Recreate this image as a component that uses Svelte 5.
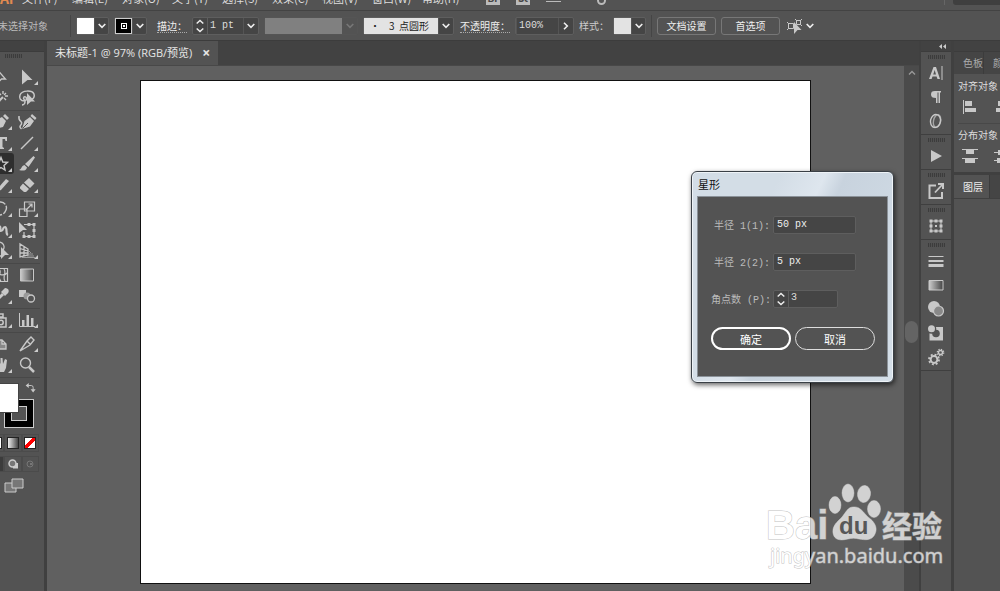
<script>
  const menus = ['文件(F)', '编辑(E)', '对象(O)', '文字(T)', '选择(S)', '效果(C)', '视图(V)', '窗口(W)', '帮助(H)']

  let strokeWidth = $state('1 pt')
  let opacity = $state('100%')
  let radius1 = $state('50 px')
  let radius2 = $state('5 px')
  let points = $state('3')
  let tool = $state('star')

  // every icon sits in a 16x16 box, currentColor for fill and stroke
  const line = 'fill="none" stroke="currentColor"'
  const icons = {
    direct: `<path d="M5 1.5 L12.5 10 L8.5 10 L5 13.5 Z" ${line} stroke-width="1.3"/>`,
    select: `<path d="M3 .5 L13.5 11 L8.5 11 L3 15.5 Z" fill="currentColor"/>`,
    wand: `<path d="M2 15 L10 7" ${line} stroke-width="2"/><path d="M10 1 v3 M13 3 l-2 2 M15 6 h-3 M6 3 l2 2 M13 10 l-2 -2" ${line} stroke-width="1.4"/>`,
    lasso: `<path d="M6 11 C1 11 0 8 1 5 C3 0 13 0 15 4 C16 7 14 9 13 9 M6 11 C9 9 7 6 5 7 C3 9 7 10 6 12 C6 14 4 15 3 15" ${line} stroke-width="1.5"/><path d="M8 3 L16 11.5 L12 11.5 L8 15 Z" fill="currentColor"/>`,
    pen: `<path d="M1 15 L3 6 L9 3 L13 7 L10 13 Z M10 2 L12 0 L16 4 L14 6 Z" fill="currentColor"/><path d="M1 15 L7 9" stroke="#535353"/>`,
    curve: `<path d="M3 15 L5.500 7 L11 3 L15 7 L11 12.500 Z M11.500 2 L13 0 L17.500 4 L16 6 Z" fill="currentColor"/><path d="M3.500 14.500 L9 9" stroke="#535353"/><path d="M0 2 C-1 8 4 7 2.500 10 C1 12 0 13 2.500 15" ${line} stroke-width="1.5"/>`,
    type: `<path d="M2 2 H14 V6 H12.500 L12 4 H9.500 V12 L11 13 V14 H5 V13 L6.500 12 V4 H4 L3.500 6 H2 Z" fill="currentColor"/>`,
    line: `<path d="M2 14 L14 2" ${line} stroke-width="1.5"/>`,
    star: `<path d="M8 1.500 L9.800 6 L14.500 6.300 L11 9.500 L12 14 L8 11.500 L4 14 L5 9.500 L1.500 6.300 L6.200 6 Z" ${line} stroke-width="1.4"/>`,
    brush: `<path d="M14.500 0 L16 1.500 L9.500 11 L6 8 Z M5.500 9 L8 11.500 C7 15 4 15 0 14 C3 13 2 10 5.500 9 Z" fill="currentColor"/>`,
    pencil: `<path d="M1 6 C5 3 7 6 4 9 C1 12 3 14 7 13" ${line} stroke-width="1.5"/><path d="M13 2 L16 4 L8 13 L5 14 L6 10 Z" fill="currentColor"/>`,
    eraser: `<path d="M1 10 L4 6.500 L10 12 L7 15 L5 15 L1 11.500 Z M5 5.500 L10 1 L15.500 6.500 L11 11 Z" fill="currentColor"/>`,
    rotate: `<path d="M4 2 C10 -1 15 4 13 9 C11 14 7 15 3 13" ${line} stroke-width="1.4" stroke-dasharray="9 1.500"/>`,
    scale: `<path d="M5.500 1 H15.500 V10 H5.500 Z M.5 8 H8 V15.500 H.5 Z M7 9 L13 3 M9.500 3 H13 V6.500" ${line} stroke-width="1.2"/>`,
    warp: `<path d="M1 14 C4 10 3 5 6 4 C9 5 6 8 8 9 C11 9 9 5 12 5 C15 6 12 12 15 13" ${line} stroke-width="2.200"/>`,
    free: `<path d="M0 0 L8 8 L4 8 L0 11 Z" fill="currentColor"/><path d="M5 2.500 H15 V14.500 H5 V10" ${line} stroke-width="1.2"/><path d="M13.500 1 h3 v3 h-3 Z M8.500 1 h3 v3 h-3 Z M13.500 7 h3 v3 h-3 Z M13.500 13 h3 v3 h-3 Z M8.500 13 h3 v3 h-3 Z M3.500 13 h3 v3 h-3 Z" fill="currentColor"/>`,
    shape: `<path d="M2 7 A5 5 0 1 1 10 7 M2 7 V13 H9" ${line} stroke-width="1.4"/><path d="M8 4 L16 12 L12 12 L8 16 Z" fill="currentColor"/>`,
    perspective: `<path d="M1 1 V14 L9 12 V6 Z M5 3.500 V13 M1 5.500 L9 8 M1 10 L9 10" ${line} stroke-width="1.3"/><path d="M10 8 L12 10 M10 11 H14 M3 14.500 H16 M8 13 H15" ${line} stroke-width="1" opacity=".6"/>`,
    mesh: `<path d="M1.500 1.500 H14.500 V14.500 H1.500 Z M1 8 C5 3 9 12 14 6 M6 2 C10 5 3 10 8 14 M11 2 C14 6 9 10 12 14" ${line} stroke-width="1.2"/>`,
    gradient: `<path d="M1.500 2 H14.500 V14 H1.500 Z" fill="url(#ramp)" stroke="currentColor"/>`,
    dropper: `<path d="M12 0 C16 0 17 4 14 6 L12 8 L8 4 Z" fill="currentColor"/><path d="M10 6 L3 13 L1 15" ${line} stroke-width="3"/>`,
    blend: `<path d="M0 2 H7 V9 H0 Z" fill="currentColor"/><circle cx="8" cy="8" r="3.500" fill="#999"/><circle cx="12" cy="10.500" r="3.500" fill="#535353" stroke="currentColor" stroke-width="1.3"/>`,
    spray: `<path d="M3 6 H13 V15 H3 Z M6 2 H10 V5 H6 Z" ${line} stroke-width="1.500"/><circle cx="8" cy="10.500" r="2.200" ${line} stroke-width="1.500"/><path d="M1 1 h2 v2 h-2 Z" fill="currentColor"/>`,
    chart: `<path d="M.5 1 V14.500 H16" ${line}/><path d="M3 8 h2.500 v6 h-2.500 Z M7.500 3 h2.500 v11 h-2.500 Z M12 6 h2.500 v8 h-2.500 Z" fill="currentColor"/>`,
    artboard: `<path d="M2 4 H9 L13 8 V13 H2 Z M9 4 V8 H13" fill="#888" stroke="currentColor" stroke-width="1.300"/>`,
    slice: `<path d="M1 15 L8 5 L12 1 L15 4 L11 9 Z M8 5 L11 8" ${line} stroke-width="1.400"/>`,
    hand: `<path d="M3 8 L5 9 L4 3 L6 3 L7.500 7 V1 H9.500 L10 7 L12 2 L14 3 L13 11 L11 15 H6 Z" fill="currentColor"/>`,
    zoom: `<circle cx="6.500" cy="6" r="5" ${line} stroke-width="1.400"/><path d="M10 10 L15 15" ${line} stroke-width="2.500"/>`,
    character: `<path d="M1 14 L5.500 2 H8 L12 14 H9.500 L8.600 11.500 H4.500 L3.600 14 Z M5.200 9.500 H8 L6.700 5 Z" fill="currentColor" fill-rule="evenodd"/><path d="M14 1 V15" ${line}/>`,
    paragraph: `<path d="M3 5.500 C3 3 4 2 7 2 H13 V3.500 H12 V14 H10.500 V3.500 H9.500 V14 H8 V9 C4.500 9 3 8 3 5.500 Z" fill="currentColor"/>`,
    opentype: `<ellipse cx="7.500" cy="8" rx="5" ry="6.500" transform="rotate(12 7.500 8)" ${line} stroke-width="1.400"/><ellipse cx="9" cy="8" rx="3.500" ry="6.500" transform="rotate(12 9 8)" ${line} stroke-width="1.400" opacity=".7"/>`,
    play: `<path d="M3 2 L14 8 L3 14 Z" fill="currentColor"/>`,
    exportAsset: `<path d="M8 2.500 H1.500 V15 H14 V9" ${line} stroke-width="2"/><path d="M7 9.500 L14 2" ${line} stroke-width="1.800"/><path d="M10 0 H16 V6 H14 V2 H10 Z" fill="currentColor"/>`,
    transform: `<path d="M3 3 H13 V13 H3 Z" ${line}/><path d="M1.500 1.500 h3 v3 h-3 Z M6.500 1.500 h3 v3 h-3 Z M11.500 1.500 h3 v3 h-3 Z M1.500 6.500 h3 v3 h-3 Z M11.500 6.500 h3 v3 h-3 Z M1.500 11.500 h3 v3 h-3 Z M6.500 11.500 h3 v3 h-3 Z M11.500 11.500 h3 v3 h-3 Z M7 7 h2 v2 h-2 Z" fill="currentColor"/>`,
    stroke: `<path d="M.5 3 H15.500 v1 H.5 Z M.5 7 H15.500 v2 H.5 Z M.5 11 H15.500 v3 H.5 Z" fill="currentColor"/>`,
    gradientPanel: `<path d="M1 3.500 H15 V13 H1 Z" fill="url(#ramp)" stroke="currentColor"/>`,
    transparency: `<circle cx="6" cy="6" r="6" fill="currentColor"/><circle cx="10.500" cy="10" r="5" fill="#888" stroke="currentColor" stroke-width="1.200"/>`,
    appearance: `<path d="M1.500 2 H15 V15.500 H1.500 Z" fill="currentColor"/><circle cx="8" cy="8.500" r="3.800" fill="#535353"/><circle cx="3.500" cy="4" r="4.800" fill="#535353"/><circle cx="3.500" cy="3.800" r="3.500" fill="currentColor"/>`,
    gears: `<circle cx="6" cy="10.500" r="3.400" ${line} stroke-width="2"/><circle cx="6" cy="10.500" r="5" ${line} stroke-width="1.800" stroke-dasharray="1.960 1.960"/><circle cx="12.500" cy="3.500" r="2" ${line} stroke-width="1.400"/><circle cx="12.500" cy="3.500" r="3.200" ${line} stroke-width="1.300" stroke-dasharray="1.260 1.260"/>`,
    alignLeft: `<path d="M1 1 h1 v14 h-1 Z M3 2 h7 v5 h-7 Z M3 9 h11 v4 h-11 Z" fill="currentColor"/>`,
    alignCenter: `<path d="M7 1 h1 v14 h-1 Z M4 2 h7 v5 h-7 Z M2 9 h11 v4 h-11 Z" fill="currentColor"/>`,
    distTop: `<path d="M0 1 h16 v1 h-16 Z M4 2 h8 v4 h-8 Z M0 10 h16 v1 h-16 Z M3 11 h10 v4 h-10 Z" fill="currentColor"/>`,
    distMiddle: `<path d="M0 4 h16 v1 h-16 Z M4 2 h8 v5 h-8 Z M0 12 h16 v1 h-16 Z M3 10 h10 v5 h-10 Z" fill="currentColor"/>`,
    similar: `<path d="M1.500 5.500 h5 v5 h-5 Z M0 4 l2 2 M0 12 l2 -2 M9.500 2.500 h4 v4 h-4 Z M8 1 l2 2 M15 1 l-2 2 M15 8 l-2 -2" ${line}/><path d="M7 4 L14.500 12 L10.500 12 L7 16 Z" fill="currentColor"/>`,
    swap: `<path d="M5 4 H10 Q13 4 13 7 V12" ${line} stroke-width="1.500"/><path d="M6 0 V8 L1 4 Z M9 10 H17 L13 15 Z" fill="currentColor"/>`,
    screens: `<path d="M1 6 H12 V15 H1 Z" fill="#777" stroke="currentColor"/><path d="M8 2 H19 V11 H8 Z" fill="#777" stroke="currentColor"/>`
  }

  const toolGroups = [
    [['direct', 0], ['select', 1], ['wand', 0], ['lasso', 0]],
    [['pen', 1], ['curve', 0], ['type', 1], ['line', 1], ['star', 1], ['brush', 1], ['pencil', 1], ['eraser', 1]],
    [['rotate', 1], ['scale', 1], ['warp', 1], ['free', 0], ['shape', 1], ['perspective', 1]],
    [['mesh', 0], ['gradient', 0], ['dropper', 1], ['blend', 0]],
    [['spray', 1], ['chart', 1]],
    [['artboard', 0], ['slice', 1], ['hand', 1], ['zoom', 0]]
  ]

  const dockGroups = [
    ['character', 'paragraph', 'opentype'],
    ['play'],
    ['exportAsset'],
    ['transform'],
    ['stroke', 'gradientPanel', 'transparency', 'appearance', 'gears']
  ]
</script>

{#snippet icon(name)}
  <svg class="icon" width="16" height="16" viewBox="0 0 16 16" aria-hidden="true">{@html icons[name]}</svg>
{/snippet}

{#snippet chevron()}
  <svg width="8" height="6" viewBox="0 0 8 6" aria-hidden="true"><path d="M.7 1 L4 4.300 L7.300 1" fill="none" stroke="currentColor" stroke-width="1.6" /></svg>
{/snippet}

{#snippet stepper()}
  <button type="button" class="stepper" aria-label="步进">
    <svg width="8" height="14" viewBox="0 0 8 14"><path d="M.7 4.500 L4 1.500 L7.300 4.500 M.7 9.500 L4 12.500 L7.300 9.500" fill="none" stroke="currentColor" stroke-width="1.500" /></svg>
  </button>
{/snippet}

<svg class="defs" width="0" height="0" aria-hidden="true">
  <linearGradient id="ramp"><stop offset="0" stop-color="#ccc" /><stop offset="1" stop-color="#444" /></linearGradient>
</svg>

<div class="app">
  <nav class="menubar">
    <span class="logo">Ai</span>
    {#each menus as menu}
      <button class="menu">{menu}</button>
    {/each}
    <span class="menu-icons">
      <i class="app-badge">Br</i>
      <i class="app-badge">St</i>
      <i class="arrange"></i>
      <i class="ring"></i>
    </span>
    <i class="menu-sep"></i>
    <span class="search"></span>
  </nav>

  <div class="controlbar">
    <span class="status">未选择对象</span>
    <i class="sep"></i>
    <div class="combo w33">
      <i class="swatch"></i>
      <button class="drop" aria-label="填色">{@render chevron()}</button>
    </div>
    <div class="combo w33">
      <i class="swatch black"><i></i></i>
      <button class="drop" aria-label="描边颜色">{@render chevron()}</button>
    </div>
    <label class="name w35" for="stroke-width"><span class="dotted">描边：</span></label>
    <div class="combo w67">
      {@render stepper()}
      <input id="stroke-width" bind:value={strokeWidth} />
      <button class="drop" aria-label="描边粗细">{@render chevron()}</button>
    </div>
    <div class="combo profile">
      <select aria-label="变量宽度配置文件" disabled><option></option></select>
      <span class="drop">{@render chevron()}</span>
    </div>
    <div class="combo brush">
      <select aria-label="画笔定义"><option>•&nbsp;&nbsp;&nbsp;&nbsp;3&nbsp;&nbsp;点圆形</option></select>
      <span class="drop">{@render chevron()}</span>
    </div>
    <label class="name w51" for="opacity"><span class="dotted">不透明度：</span></label>
    <div class="combo w59">
      <input id="opacity" bind:value={opacity} />
      <button class="drop right" aria-label="不透明度">{@render chevron()}</button>
    </div>
    <span class="name w29">样式：</span>
    <div class="combo w33">
      <i class="swatch pale"></i>
      <button class="drop" aria-label="样式">{@render chevron()}</button>
    </div>
    <i class="sep"></i>
    <button class="outlined">文档设置</button>
    <button class="outlined">首选项</button>
    <button class="similar" aria-label="选择类似的对象">{@render icon('similar')}{@render chevron()}</button>
  </div>

  <main>
    <aside class="tools">
      <div class="dock-head"></div>
      <i class="grip"></i>
      <div class="tool-list">
        {#each toolGroups as group}
          <div class="tool-group">
            {#each group as [name, more]}
              <button class="tool" class:active={tool === name} class:more={more} aria-label={name} onclick={() => (tool = name)}>
                {@render icon(name)}
              </button>
            {/each}
          </div>
        {/each}
      </div>
      <div class="colors">
        <i class="stroke-color"><i></i></i>
        <i class="fill-color"></i>
        <span class="swap">{@render icon('swap')}</span>
      </div>
      <div class="modes">
        <button aria-label="颜色"><i class="mode-color"></i></button>
        <button aria-label="渐变"><i class="mode-gradient"></i></button>
        <button aria-label="无"><i class="mode-none"></i></button>
      </div>
      <div class="modes draw">
        <button class="on" aria-label="正常绘图"><svg width="10" height="10"><path d="M2 4 h5 v5 h-5 Z" fill="#ccc" /></svg></button>
        <button aria-label="背面绘图"><svg width="10" height="10"><path d="M5 4 h5 v5.500 h-5 Z" fill="#ccc" /><circle cx="4.500" cy="4.500" r="3.500" fill="#777" stroke="#ccc" stroke-width="1.500" /></svg></button>
        <button aria-label="内部绘图"><svg width="10" height="10"><circle cx="5" cy="5" r="3" fill="none" stroke="#777" /><path d="M5 4 h2 v2 h-2 Z" fill="#777" /></svg></button>
      </div>
      <button class="screens" aria-label="更改屏幕模式">
        <svg width="20" height="16" viewBox="0 0 20 16">{@html icons.screens}</svg>
      </button>
    </aside>

    <section class="document">
      <div class="tabs">
        <div class="tab">未标题-1 @ 97% (RGB/预览)<button aria-label="关闭">×</button></div>
      </div>
      <div class="view">
        <div class="canvas"><div class="artboard"></div></div>
        <div class="scrollbar">
          <svg width="8" height="6" viewBox="0 0 8 6"><path d="M1 4.500 L4 1.500 L7 4.500" fill="none" stroke="#999" stroke-width="1.400" /></svg>
          <i class="thumb"></i>
        </div>
      </div>
    </section>

    <aside class="dock">
      <div class="dock-head"><svg width="7" height="5"><path d="M3 0 V5 L0 2.500 Z M7 0 V5 L4 2.500 Z" fill="#ccc" /></svg></div>
      {#each dockGroups as group}
        <div class="dock-group">
          <i class="grip"></i>
          {#each group as name}
            <button aria-label={name}>{@render icon(name)}</button>
          {/each}
        </div>
      {/each}
    </aside>

    <aside class="panels">
      <div class="dock-head"></div>
      <div class="panel-tabs"><button>色板</button><button>颜色</button></div>
      <div class="align">
        <h3>对齐对象</h3>
        <div class="align-row">{@render icon('alignLeft')}{@render icon('alignCenter')}</div>
        <hr />
        <h3>分布对象</h3>
        <div class="align-row">{@render icon('distTop')}{@render icon('distMiddle')}</div>
      </div>
      <div class="panel-tabs layers"><button class="current">图层</button></div>
    </aside>
  </main>

  <div class="dialog" role="dialog" aria-labelledby="star-title">
    <h2 id="star-title">星形</h2>
    <form onsubmit={(e) => e.preventDefault()}>
      <div class="field">
        <label for="radius1">半径 1(1):</label>
        <input id="radius1" bind:value={radius1} />
      </div>
      <div class="field">
        <label for="radius2">半径 2(2):</label>
        <input id="radius2" bind:value={radius2} />
      </div>
      <div class="field">
        <label for="points">角点数 (P):</label>
        <div class="combo points">
          {@render stepper()}
          <input id="points" bind:value={points} />
        </div>
      </div>
      <div class="actions">
        <button class="ok">确定</button>
        <button type="button">取消</button>
      </div>
    </form>
  </div>

  <svg class="watermark" width="190" height="92" viewBox="0 0 190 92" aria-hidden="true">
    <g fill="#fff" stroke="#aaa" stroke-width="1" paint-order="stroke">
      <text class="wm-latin" x="6" y="59">Bai</text>
      <ellipse cx="75" cy="25" rx="6" ry="8.500" />
      <ellipse cx="88" cy="13" rx="6" ry="9" />
      <ellipse cx="104" cy="14" rx="6.500" ry="8.500" transform="rotate(8 104 14)" />
      <ellipse cx="114" cy="29" rx="6.500" ry="8.500" />
      <path d="M93 27 C100 26 103 32 108 37 C115 42 118 48 115 54 C112 61 105 60 99 59 C95 58 92 58 88 59 C80 61 74 60 73 53 C72 46 77 42 82 37 C86 32 88 27 93 27 Z" />
      <text class="wm-cjk" x="122" y="57">经验</text>
      <text class="wm-url" x="10" y="83">jingyan.baidu.com</text>
    </g>
    <text class="wm-du" x="79" y="54">du</text>
  </svg>
</div>

<style>
  :global(body) {
    margin: 0;
    background: #535353;
  }

  .app {
    position: relative;
    display: flex;
    flex-direction: column;
    height: 100vh;
    overflow: hidden;
    background: #535353;
    color: #ddd;
    font: 10px/14px 'Noto Sans CJK SC', sans-serif;
  }

  .app :global(*) {
    box-sizing: border-box;
  }

  .defs {
    position: absolute;
  }

  button,
  input,
  select {
    margin: 0;
    padding: 0;
    border: 0;
    border-radius: 0;
    background: none;
    color: inherit;
    font: inherit;
  }

  i {
    display: block;
    flex: none;
  }

  svg {
    display: block;
    flex: none;
  }

  .icon {
    overflow: visible;
    color: #c8c8c8;
  }

  /* menu bar, scrolled mostly off the top */
  .menubar {
    display: flex;
    flex: none;
    align-items: flex-end;
    height: 11px;
    padding-bottom: 5px;
    overflow: hidden;
    border-bottom: 1px solid #434343;
  }

  .logo {
    width: 22px;
    color: #e08a50;
    font-size: 14px;
    font-weight: bold;
  }

  .menu {
    width: 50px;
    text-align: left;
    font-size: 11px;
    line-height: 14px;
  }

  .menu-icons {
    display: flex;
    align-items: flex-end;
    gap: 16px;
    margin-left: 14px;
  }

  .app-badge {
    width: 14px;
    height: 14px;
    background: #bbb;
    color: #444;
    font-size: 10px;
    font-style: normal;
    font-weight: bold;
    text-align: center;
  }

  .arrange {
    width: 15px;
    height: 10px;
    margin-bottom: 3px;
    border-bottom: 1px solid #bbb;
  }

  .ring {
    width: 9px;
    height: 9px;
    margin-left: 20px;
    border: 2px solid #bbb;
    border-radius: 50%;
  }

  .menu-sep {
    width: 1px;
    height: 14px;
    margin-left: auto;
    background: #666;
  }

  .search {
    width: 47px;
    height: 16px;
    margin-left: 8px;
    border-radius: 3px 0 0 3px;
    background: #3f3f3f;
  }

  /* control bar */
  .controlbar {
    display: flex;
    flex: none;
    align-items: center;
    gap: 5px;
    height: 29px;
    white-space: nowrap;
  }

  .status {
    width: 65px;
    text-indent: -2px;
    color: #bbb;
  }

  .sep {
    width: 1px;
    height: 22px;
    background: #454545;
  }

  .combo {
    display: flex;
    flex: none;
    height: 18px;
    border: 1px solid #5e5e5e;
    border-radius: 2px;
    background: #454545;
  }

  .w33 {
    width: 33px;
  }

  .w67 {
    width: 67px;
  }

  .w59 {
    width: 59px;
  }

  .combo input {
    flex: 1;
    min-width: 0;
    padding: 0 2px;
    border-left: 1px solid #555;
    font: 10px/14px 'Liberation Mono', monospace;
  }

  .combo .stepper + input {
    border-left: 1px solid #5e5e5e;
  }

  .drop,
  .stepper {
    display: flex;
    flex: none;
    align-items: center;
    justify-content: center;
    width: 15px;
    border-left: 1px solid #555;
    color: #eee;
  }

  .stepper {
    width: 14px;
    border: 0;
  }

  .right svg {
    transform: rotate(-90deg);
  }

  .swatch {
    width: 17px;
    height: 16px;
    background: #fff;
  }

  .swatch.pale {
    background: #e3e3e3;
  }

  .swatch.black {
    display: grid;
    place-items: center;
    border: 1px solid #ccc;
    background: #000;
  }

  .swatch.black i {
    width: 6px;
    height: 6px;
    border: 1px solid #fff;
    background: radial-gradient(#fff 1px, #000 1px);
  }

  .name {
    flex: none;
    color: #ccc;
    text-align: right;
  }

  .w35 {
    width: 35px;
  }

  .w51 {
    width: 51px;
  }

  .w29 {
    width: 29px;
  }

  .dotted {
    display: inline-block;
    border-bottom: 1px dotted #aaa;
    color: #eee;
    line-height: 12px;
  }

  select {
    flex: 1;
    min-width: 0;
    appearance: none;
    opacity: 1;
  }

  .profile {
    width: 94px;
    border-color: #555;
    background: #535353;
  }

  .profile select {
    background: #808080;
  }

  .profile .drop {
    border: 0;
    color: #777;
  }

  .brush {
    width: 91px;
  }

  .brush select {
    padding-left: 6px;
    background: #e3e3e3;
    color: #222;
  }

  .outlined {
    width: 59px;
    height: 18px;
    border: 1px solid #777;
    border-radius: 3px;
    color: #eee;
  }

  .similar {
    display: flex;
    align-items: center;
    gap: 3px;
    margin-left: 2px;
    color: #eee;
  }

  /* workspace */
  main {
    display: flex;
    flex: 1;
    min-height: 0;
    border-top: 1px solid #3c3c3c;
  }

  .dock-head {
    display: flex;
    flex: none;
    align-items: center;
    justify-content: flex-end;
    height: 11px;
    padding-right: 5px;
    border-bottom: 1px solid #3c3c3c;
    background: #424242;
  }

  .grip {
    width: 17px;
    height: 4px;
    background: repeating-linear-gradient(90deg, #3c3c3c 0 1px, #505050 1px 2px);
  }

  .tools {
    display: flex;
    flex: none;
    flex-direction: column;
    width: 47px;
    border-right: 3px solid #404040;
  }

  .tools > .grip {
    margin: 2px 0 8px 5px;
  }

  .tool-list {
    width: 52px;
    margin-left: -12px;
  }

  .tool-group {
    display: grid;
    grid-template-columns: 26px 26px;
    padding-bottom: 2px;
    border-bottom: 1px solid #484848;
  }

  .tool {
    position: relative;
    display: grid;
    place-items: center;
    height: 21px;
  }

  .tool.active {
    border-radius: 3px;
    background: #2e2e2e;
  }

  .more::after {
    content: '';
    position: absolute;
    right: 2px;
    bottom: 2px;
    border: 2px solid #ccc;
    border-top-color: transparent;
    border-left-color: transparent;
  }

  .colors {
    position: relative;
    flex: none;
    height: 52px;
    margin-top: 4px;
  }

  .fill-color {
    position: absolute;
    left: -8px;
    top: 1px;
    width: 27px;
    height: 30px;
    border: 1px solid #444;
    background: #fff;
  }

  .stroke-color {
    position: absolute;
    left: 4px;
    top: 17px;
    width: 30px;
    height: 29px;
    padding: 6px;
    border: 1px solid #ccc;
    background: #000;
  }

  .stroke-color i {
    height: 100%;
    border: 1px solid #ccc;
    background: #535353;
  }

  .swap {
    position: absolute;
    left: 25px;
    top: 1px;
    width: 10px;
    height: 10px;
  }

  .swap .icon {
    width: 10px;
    height: 10px;
  }

  .modes {
    display: flex;
    flex: none;
    width: 52px;
    height: 18px;
    margin-left: -13px;
  }

  .modes button {
    display: grid;
    flex: 1;
    place-items: center;
    border: 1px solid #4b4b4b;
  }

  .modes i {
    width: 12px;
    height: 12px;
    border: 1px solid #222;
    background: #fff;
  }

  .modes .mode-gradient {
    background: linear-gradient(90deg, #eee, #444);
  }

  .modes .mode-none {
    background: linear-gradient(135deg, #fff 38%, #f00 38% 62%, #fff 62%);
  }

  .draw {
    height: 16px;
    margin-top: 4px;
  }

  .draw .on {
    background: #3c3c3c;
  }

  .screens {
    width: 20px;
    margin: 5px 0 0 4px;
    color: #ccc;
  }

  .document {
    display: flex;
    flex: 1;
    flex-direction: column;
    min-width: 0;
  }

  .tabs {
    display: flex;
    flex: none;
    height: 25px;
    border-bottom: 1px solid #484848;
    background: #424242;
  }

  .tab {
    display: flex;
    align-items: center;
    gap: 10px;
    padding: 0 8px;
    background: #535353;
    color: #e6e6e6;
    font: 11px/16px 'Open Sans', 'Noto Sans CJK SC', sans-serif;
  }

  .tab button {
    font-size: 14px;
    font-weight: bold;
  }

  .view {
    display: flex;
    flex: 1;
    min-height: 0;
  }

  .canvas {
    flex: 1;
    padding: 14px 93px 7px;
    background: #606060;
  }

  .artboard {
    height: 100%;
    border: 1px solid #111;
    background: #fff;
  }

  .scrollbar {
    display: flex;
    flex: none;
    flex-direction: column;
    align-items: center;
    width: 15px;
    padding-top: 4px;
    background: #4b4b4b;
  }

  .thumb {
    width: 13px;
    height: 22px;
    margin-top: 245px;
    border-radius: 7px;
    background: #646464;
  }

  .dock {
    flex: none;
    width: 35px;
    border: solid #404040;
    border-width: 0 3px 0 2px;
  }

  .dock-group {
    display: flex;
    flex-direction: column;
    align-items: center;
    padding: 3px 0 1px;
    border-bottom: 1px solid #3f3f3f;
  }

  .dock-group .grip {
    margin-bottom: 2px;
  }

  .dock-group button {
    display: grid;
    place-items: center;
    width: 100%;
    height: 24px;
  }

  .panels {
    flex: none;
    width: 46px;
    overflow: hidden;
    white-space: nowrap;
  }

  .panel-tabs {
    display: flex;
    height: 22px;
    background: #454545;
  }

  .panel-tabs button {
    flex: none;
    width: 30px;
    padding-left: 9px;
    border-right: 1px solid #3c3c3c;
    color: #aaa;
    font-size: 10px;
    text-align: left;
  }

  .align {
    height: 98px;
    padding: 5px 0 0 4px;
  }

  h3 {
    margin: 0;
    font-size: 10px;
    font-weight: 400;
    line-height: 14px;
  }

  .align-row {
    display: flex;
    gap: 16px;
    padding: 0 4px;
    margin: 6px 0 8px;
  }

  .align hr {
    height: 1px;
    margin: 0 0 4px;
    border: 0;
    background: #484848;
  }

  .layers {
    height: 27px;
    border-top: 3px solid #404040;
    border-bottom: 1px solid #404040;
  }

  .layers .current {
    width: 36px;
    background: #535353;
    color: #eee;
  }

  /* floating dialog */
  .dialog {
    position: absolute;
    left: 691px;
    top: 171px;
    width: 203px;
    padding: 0 5px 5px;
    border: 1px solid #3a4046;
    border-radius: 6px;
    background: linear-gradient(115deg, #d3dde6 0 30%, #dee6ee 45%, #c8d3de 52%, #d5dfe8);
    box-shadow: inset 0 0 0 1px #eef3f7, 1px 2px 5px rgba(0, 0, 0, 0.6);
  }

  .dialog h2 {
    margin: 0;
    padding-left: 1px;
    color: #111;
    font-size: 11px;
    font-weight: 400;
    line-height: 24px;
  }

  .dialog form {
    padding: 19px 13px 26px;
    border: 1px solid #8b9299;
    background: #535353;
  }

  .field {
    display: flex;
    align-items: center;
    gap: 3px;
    height: 18px;
    margin-bottom: 19px;
    font: 10px/14px 'Liberation Mono', 'Noto Sans CJK SC', monospace;
  }

  .field label {
    width: 59px;
    padding-top: 4px;
    color: #bbb;
    text-align: right;
    white-space: nowrap;
  }

  .field > input {
    width: 83px;
    height: 18px;
    padding: 0 3px 2px;
    border: 1px solid #5e5e5e;
    border-radius: 2px;
    background: #454545;
    color: #eee;
  }

  .points {
    width: 65px;
  }

  .points input {
    padding-bottom: 2px;
  }

  .actions {
    display: flex;
    gap: 4px;
  }

  .actions button {
    flex: none;
    width: 80px;
    height: 23px;
    border: 1px solid #ddd;
    border-radius: 12px;
    color: #fff;
    font-size: 11px;
  }

  .actions .ok {
    border: 2px solid #fff;
  }

  .watermark {
    position: absolute;
    right: 50px;
    bottom: 19px;
    opacity: 0.72;
    pointer-events: none;
  }

  .wm-latin {
    font: bold 40px 'Liberation Sans', sans-serif;
  }

  .wm-cjk {
    font: bold 30px 'Noto Sans CJK SC', sans-serif;
  }

  .wm-url {
    font: 20px 'Noto Sans', sans-serif;
  }

  .wm-du {
    fill: #555;
    font: bold 24px 'Liberation Sans', sans-serif;
  }
</style>
